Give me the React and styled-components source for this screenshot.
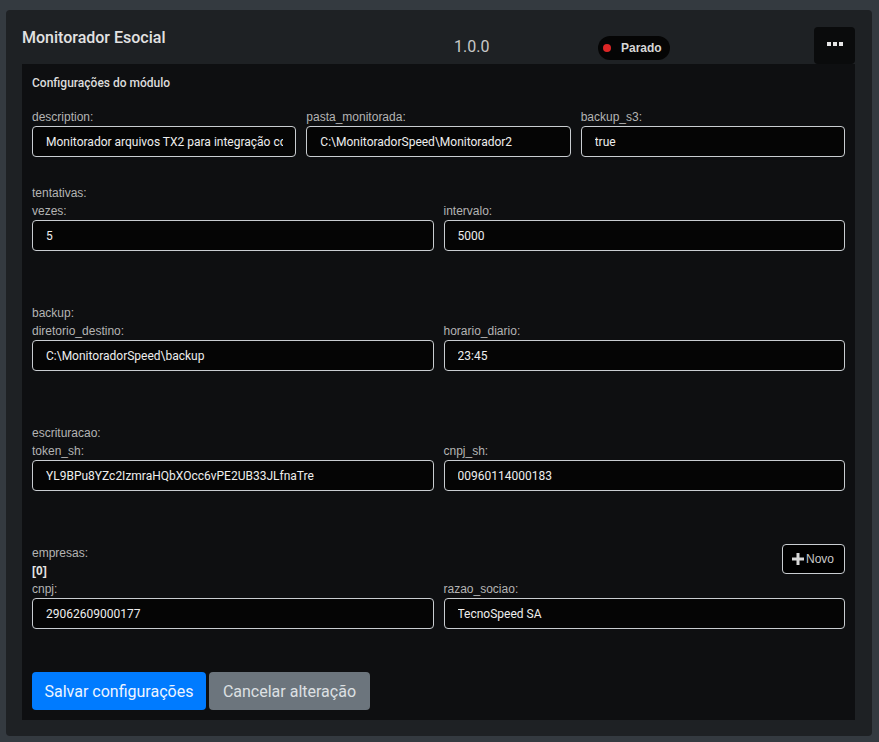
import React from 'react';
import styled, {createGlobalStyle} from 'styled-components';

const GlobalStyle = createGlobalStyle`
    html, body {
        margin: 0;
        background: #343a40;
        font-family: Roboto, "Liberation Sans", sans-serif;
    }
`;

const Card = styled.div`
    margin: 10px 7px 6px 6px;
    height: 726px;
    box-sizing: border-box;
    background: #1e2124;
    border-radius: 4px;
    padding: 16px 17px 16px 16px;
    display: flex;
    flex-direction: column;
`;

const Header = styled.div`
    display: grid;
    grid-template-columns: 432px 144px 1fr auto;
    align-items: center;
    height: 38px;
`;

const Title = styled.h2`
    align-self: start;
    margin: 0;
    font-size: 16px;
    line-height: 24px;
    font-weight: 500;
    color: #e2e2e2;
`;

const Version = styled.span`
    font-size: 16px;
    color: #c8c8c8;
    padding-top: 2px;
`;

const Badge = styled.span`
    justify-self: start;
    display: inline-flex;
    align-items: center;
    gap: 10px;
    height: 24px;
    padding: 0 8px 0 5px;
    background: #050505;
    border-radius: 12px;
    font-family: "Liberation Sans", Arial, sans-serif;
    font-size: 12px;
    font-weight: bold;
    color: #d6d6d6;
    margin-top: 5px;
`;

const Dot = styled.span`
    width: 8px;
    height: 8px;
    border-radius: 50%;
    background: ${p => p.color};
`;

const MenuButton = styled.button`
    width: 41px;
    height: 37px;
    margin-top: 1px;
    border: none;
    border-radius: 4px;
    background: #0a0b0c;
    display: flex;
    align-items: center;
    justify-content: center;
    gap: 2px;
    padding: 0 0 4px;
`;

const Square = styled.span`
    width: 4px;
    height: 4px;
    background: #e6e6e6;
`;

const Panel = styled.div`
    flex: 1;
    background: #0e0f11;
    padding: 10px;
    display: flex;
    flex-direction: column;
`;

const PanelTitle = styled.div`
    font-size: 12px;
    line-height: 18px;
    font-weight: 500;
    color: #dcdcdc;
    margin-bottom: 16px;
`;

const Section = styled.div`
    margin-top: ${p => p.$gap || 0}px;
`;

const Row = styled.div`
    display: grid;
    grid-template-columns: repeat(${p => p.$cols}, 1fr);
    gap: 10px;
`;

const Label = styled.div`
    font-family: "Liberation Sans", Arial, sans-serif;
    font-size: 12px;
    line-height: 18px;
    color: #b4b4b4;
`;

const Index = styled.div`
    font-family: "Liberation Sans", Arial, sans-serif;
    font-size: 12px;
    line-height: 18px;
    font-weight: bold;
    color: #e4e4e4;
`;

const Input = styled.input`
    display: block;
    width: 100%;
    box-sizing: border-box;
    height: 31px;
    padding: 0 12px 0 13px;
    background: #050505;
    border: 1px solid #c9cdd1;
    border-radius: 4px;
    color: #eeeeee;
    font-family: Roboto, sans-serif;
    font-size: 12px;
    outline: none;
`;

const GroupHead = styled.div`
    display: flex;
    justify-content: space-between;
    align-items: flex-start;
`;

const NovoButton = styled.button`
    display: inline-flex;
    align-items: center;
    gap: 2px;
    height: 30px;
    padding: 0 10px 0 9px;
    background: #000;
    border: 1px solid #c9cdd1;
    border-radius: 4px;
    color: #c8c8c8;
    font-family: "Liberation Sans", Arial, sans-serif;
    font-size: 12px;
`;

const Actions = styled.div`
    display: flex;
    gap: 3px;
    margin-top: 43px;
`;

const Button = styled.button`
    height: 38px;
    padding: 0 ${p => p.$variant === 'secondary' ? 14 : 12.5}px;
    border: none;
    border-radius: 4px;
    background: ${p => p.$variant === 'secondary' ? '#6c757d' : '#007bff'};
    color: ${p => p.$variant === 'secondary' ? '#dde0e3' : '#eef4ff'};
    font-family: Roboto, sans-serif;
    font-size: 16px;
`;

const Field = ({label, value}) => (
    <div>
        <Label>{label}</Label>
        <Input value={value} readOnly />
    </div>
);

const PlusIcon = () => (
    <svg width="12" height="12" viewBox="0 0 12 12">
        <path d="M4.5 0h3v4.5H12v3H7.5V12h-3V7.5H0v-3h4.5z" fill="#d8d8d8" />
    </svg>
);

const App = () => {
    return (
        <>
            <GlobalStyle />
            <Card>
                <Header>
                    <Title>Monitorador Esocial</Title>
                    <Version>1.0.0</Version>
                    <Badge><Dot color="#dc2626" />Parado</Badge>
                    <MenuButton><Square /><Square /><Square /></MenuButton>
                </Header>
                <Panel>
                    <PanelTitle>Configurações do módulo</PanelTitle>
                    <Row $cols={3}>
                        <Field label="description:" value="Monitorador arquivos TX2 para integração com o eSocial" />
                        <Field label="pasta_monitorada:" value="C:\MonitoradorSpeed\Monitorador2" />
                        <Field label="backup_s3:" value="true" />
                    </Row>

                    <Section $gap={27}>
                        <Label>tentativas:</Label>
                        <Row $cols={2}>
                            <Field label="vezes:" value="5" />
                            <Field label="intervalo:" value="5000" />
                        </Row>
                    </Section>

                    <Section $gap={53}>
                        <Label>backup:</Label>
                        <Row $cols={2}>
                            <Field label="diretorio_destino:" value="C:\MonitoradorSpeed\backup" />
                            <Field label="horario_diario:" value="23:45" />
                        </Row>
                    </Section>

                    <Section $gap={53}>
                        <Label>escrituracao:</Label>
                        <Row $cols={2}>
                            <Field label="token_sh:" value="YL9BPu8YZc2IzmraHQbXOcc6vPE2UB33JLfnaTre" />
                            <Field label="cnpj_sh:" value="00960114000183" />
                        </Row>
                    </Section>

                    <Section $gap={53}>
                        <GroupHead>
                            <div>
                                <Label>empresas:</Label>
                                <Index>[0]</Index>
                            </div>
                            <NovoButton><PlusIcon />Novo</NovoButton>
                        </GroupHead>
                        <Row $cols={2}>
                            <Field label="cnpj:" value="29062609000177" />
                            <Field label="razao_sociao:" value="TecnoSpeed SA" />
                        </Row>
                    </Section>

                    <Actions>
                        <Button>Salvar configurações</Button>
                        <Button $variant="secondary">Cancelar alteração</Button>
                    </Actions>
                </Panel>
            </Card>
        </>
    );
};

export default App;
